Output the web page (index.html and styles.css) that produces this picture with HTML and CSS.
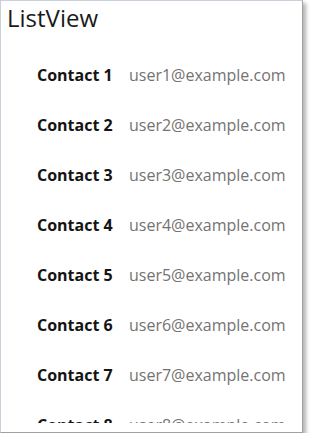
FILE: index.html
```html
<!DOCTYPE html>
<html>
<head>
<meta charset="utf-8">
<link rel="stylesheet" href="styles.css">
</head>
<body>
<div class="panel">
  <h1 class="title">ListView</h1>
  <div class="list">
    <div class="row"><span class="name">Contact 1</span><span class="email">user1@example.com</span></div>
    <div class="row"><span class="name">Contact 2</span><span class="email">user2@example.com</span></div>
    <div class="row"><span class="name">Contact 3</span><span class="email">user3@example.com</span></div>
    <div class="row"><span class="name">Contact 4</span><span class="email">user4@example.com</span></div>
    <div class="row"><span class="name">Contact 5</span><span class="email">user5@example.com</span></div>
    <div class="row"><span class="name">Contact 6</span><span class="email">user6@example.com</span></div>
    <div class="row"><span class="name">Contact 7</span><span class="email">user7@example.com</span></div>
    <div class="row"><span class="name">Contact 8</span><span class="email">user8@example.com</span></div>
  </div>
</div>
</body>
</html>
```
FILE: styles.css
```css
html, body {
  margin: 0;
  padding: 0;
  background: #ffffff;
}
body {
  font-family: "Open Sans", "Noto Sans", sans-serif;
}
.panel {
  box-sizing: border-box;
  width: 303px;
  height: 433px;
  background: #ffffff;
  border-left: 1px solid #c9d0dc;
  border-top: 1px solid #c9d0dc;
  border-right: 1px solid #a0a0a0;
  border-bottom: 1px solid #a0a0a0;
  box-shadow: 3px 3px 4px rgba(0, 0, 0, 0.3);
  display: flex;
  flex-direction: column;
}
.title {
  margin: 0;
  padding: 1px 0 0 6px;
  height: 48px;
  font-size: 24px;
  line-height: 32px;
  font-weight: 500;
  color: #1a1a1a;
}
.list {
  height: 373px;
  overflow: hidden;
  display: flex;
  flex-direction: column;
}
.row {
  display: grid;
  grid-template-columns: 92px auto;
  padding-left: 36px;
  height: 50px;
  line-height: 50px;
  font-size: 16px;
  flex: none;
}
.name {
  font-weight: 700;
  color: #141414;
}
.email {
  color: #737373;
}
```
